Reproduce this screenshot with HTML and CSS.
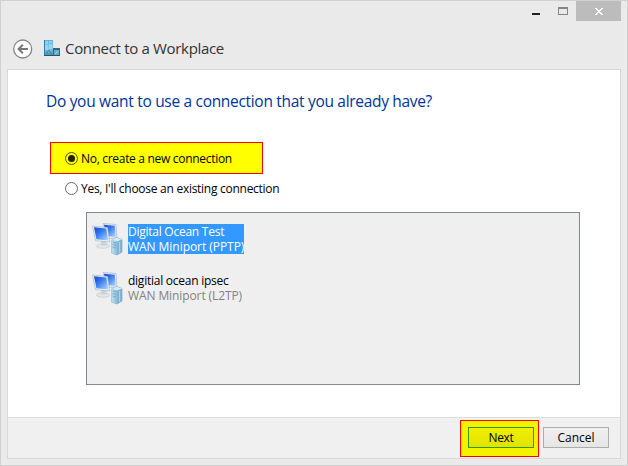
FILE: index.html
```html
<!DOCTYPE html>
<html lang="en">
<head>
<meta charset="utf-8">
<title>Connect to a Workplace</title>
<link rel="stylesheet" href="styles.css">
</head>
<body>
<svg class="defs" width="0" height="0" aria-hidden="true">
  <defs>
    <linearGradient id="screen" x1="0" y1="0" x2="1" y2="1">
      <stop offset="0" stop-color="#1547cf"/><stop offset=".4" stop-color="#3577ee"/><stop offset="1" stop-color="#b0dcff"/>
    </linearGradient>
    <linearGradient id="tower" x1="0" y1="0" x2="1" y2="0">
      <stop offset="0" stop-color="#c3e2f2"/><stop offset="1" stop-color="#8cbbd8"/>
    </linearGradient>
    <linearGradient id="glass" x1="0" y1="0" x2="0" y2="1">
      <stop offset="0" stop-color="#5fb0d6"/><stop offset=".5" stop-color="#8ccbe8"/><stop offset="1" stop-color="#3f8ab0"/>
    </linearGradient>
    <symbol id="network" viewBox="0 0 32 34">
      <path d="M11 1.500 24 2.500 25 16l-10 .5z" fill="#e4edf5" stroke="#a9b9c8" stroke-width=".7"/>
      <path d="M12 2.800 22.800 3.700 23.700 15 14 14z" fill="url(#screen)"/>
      <ellipse cx="11" cy="24" rx="6.500" ry="2.300" fill="#e4e6e8" stroke="#bfc3c7" stroke-width=".6"/>
      <path d="M9 19h5l1 4.500H9z" fill="#cdd2d7"/>
      <path d="M.5 4 15.500 5.500l2 14.500-14-1.300z" fill="#edf4fa" stroke="#a5b6c6" stroke-width=".7"/>
      <path d="M2 5.300 14.300 6.600 16.200 18.400 4.400 17.200z" fill="url(#screen)"/>
      <path d="m19.500 18 5-2.500 5.500 2v12.500L25 33l-5.500-2z" fill="#84b4d2" stroke="#709fbe" stroke-width=".6"/>
      <path d="m19.500 18 5-2.500 5.500 2-5 2z" fill="#d4eaf5"/>
      <path d="m19.500 18 5.500 1.500V33l-5.500-2z" fill="url(#tower)"/>
      <path d="m20.500 20 3.500 1m-3.500 1.500 3.500 1m-3.500 1.500 3.500 1" stroke="#5d93b8" stroke-width=".6"/>
      <path d="M27.500 20v11" stroke="#bfe0f0" stroke-width=".7"/>
    </symbol>
  </defs>
</svg>
<div class="window">
  <div class="controls">
    <span class="minimize"></span>
    <span class="maximize"></span>
    <span class="close"><svg width="8" height="7" viewBox="0 0 8 7" shape-rendering="crispEdges"><path d="M0 0h2v1h1v1h2V1h1V0h2v1H7v1H6v1H5v1h1v1h1v1h1v1H6V6H5V5H3v1H2v1H0V6h1V5h1V4h1V3H2V2H1V1H0z" fill="#fff"/></svg></span>
  </div>
  <header class="header">
    <svg class="back" width="20" height="20" viewBox="0 0 20 20"><circle cx="9.700" cy="10" r="9" fill="#fcfcfc" stroke="#878787" stroke-width="1.300"/><path d="M15 10H6M9.800 5.800 5.600 10l4.200 4.200" fill="none" stroke="#777" stroke-width="2"/></svg>
    <svg class="building" width="16" height="16" viewBox="0 0 16 16"><path d="M0 0h9v16H0z" fill="url(#glass)"/><path d="M1 1h3v3H1zM5 1h3v2H5zM5 4h3v5H5zM1 5h3v5H1z" fill="#a9dcf1" opacity=".65"/><path d="m4.500 10-2 4M5 10l2.500 4" stroke="#397997" stroke-width=".8"/><path d="M0 0h1v16H0z" fill="#347da3"/><path d="M9 8h7v8H9z" fill="#34677f"/><path d="M10 10h5v5h-5z" fill="#69a9c6"/><path d="m11 14 3-3" stroke="#a0d0e4"/><path d="M0 15.500h16" stroke="#24566f"/></svg>
    <span class="title">Connect to a Workplace</span>
  </header>
  <main class="panel">
    <section class="content">
      <h1>Do you want to use a connection that you already have?</h1>
      <div class="option marked"><i class="radio on"></i><span>No, create a new connection</span></div>
      <div class="option"><i class="radio"></i><span>Yes, I'll choose an existing connection</span></div>
      <div class="list">
        <div class="item selected"><svg width="32" height="34"><use href="#network"/></svg><div class="label"><span class="name">Digital Ocean Test</span><span class="device">WAN Miniport (PPTP)</span></div></div>
        <div class="item"><svg width="32" height="34"><use href="#network"/></svg><div class="label"><span class="name">digitial ocean ipsec</span><span class="device">WAN Miniport (L2TP)</span></div></div>
      </div>
    </section>
    <footer class="footer">
      <div class="next-mark"><div class="button next">Next</div></div>
      <div class="button cancel">Cancel</div>
    </footer>
  </main>
</div>
</body>
</html>
```
FILE: styles.css
```css
* { box-sizing: border-box; }
body { margin: 0; font: 12px/15px "Open Sans", "Noto Sans", sans-serif; color: #000; }
.defs { display: block; }
.window { width: 628px; height: 466px; background: #eaeaea; border: 1px solid #d0d0d0; display: flex; flex-direction: column; }
.controls { height: 20px; display: flex; justify-content: flex-end; padding-right: 6px; }
.minimize { width: 8px; height: 2px; background: #222; margin: 12px 18px 0 0; }
.maximize { width: 10px; height: 8px; border: 1px solid #858585; border-top-width: 2px; margin: 6px 8px 0 0; }
.close { width: 45px; height: 20px; background: #bcbcbc; display: flex; justify-content: center; padding-top: 7px; }
.header { height: 48px; display: flex; padding-left: 12px; }
.back { margin-top: 18px; }
.building { margin: 19px 0 0 11px; }
.title { margin: 17px 0 0 5px; font-size: 15px; line-height: 20px; letter-spacing: -0.32px; color: #333; white-space: nowrap; }
.panel { width: 614px; height: 390px; margin-left: 6px; border: 1px solid #d8d8d8; background: #fff; display: flex; flex-direction: column; }
.content { height: 347px; padding: 20px 40px 0 38px; white-space: nowrap; }
h1 { margin: 0; height: 22px; font-size: 15.5px; line-height: 22px; letter-spacing: -0.31px; font-weight: 400; color: #003399; }
.option { height: 32px; display: flex; align-items: center; padding-left: 19px; letter-spacing: -0.27px; }
.marked { width: 213px; margin: 30px 0 0 4px; padding-left: 14px; border: 1px solid #f00; background: #ff0; letter-spacing: -0.3px; }
.marked + .option { height: 28px; }
.radio { width: 13px; height: 13px; border: 1px solid #666; border-radius: 50%; background: #fff; margin-right: 3px; display: grid; place-items: center; }
.radio.on { background: #ff0; border-color: #555500; }
.radio.on::after { content: ""; width: 7px; height: 7px; border-radius: 50%; background: #222200; }
.list { width: 494px; height: 173px; margin: 10px 0 0 40px; padding: 9px 0 0 5px; border: 1px solid #828790; background: #efefef; }
.item { display: flex; height: 49px; }
.label { margin: 2px 0 0 4px; height: 30px; display: flex; flex-direction: column; }
.label span { display: block; }
.name { letter-spacing: -0.25px; }
.device { color: #838383; letter-spacing: -0.1px; }
.selected .label { background: #3399ff; }
.selected .label span { color: #fff; }
.selected .device { letter-spacing: -0.05px; }
.footer { flex: 1; border-top: 1px solid #dfdfdf; background: #f0f0f0; display: flex; justify-content: flex-end; padding: 2px 11px 0 0; }
.next-mark { width: 79px; height: 37px; border: 1px solid #f00; background: #f3f300; padding: 6px 0 0 7px; margin-right: 4px; }
.button { width: 66px; height: 21px; border: 1px solid #acacac; background: linear-gradient(#f0f0f0, #e5e5e5); text-align: center; line-height: 19px; }
.next { border-color: #339900; background: linear-gradient(#f0f000, #e2e200); letter-spacing: -0.3px; }
.cancel { margin-top: 7px; }
```
